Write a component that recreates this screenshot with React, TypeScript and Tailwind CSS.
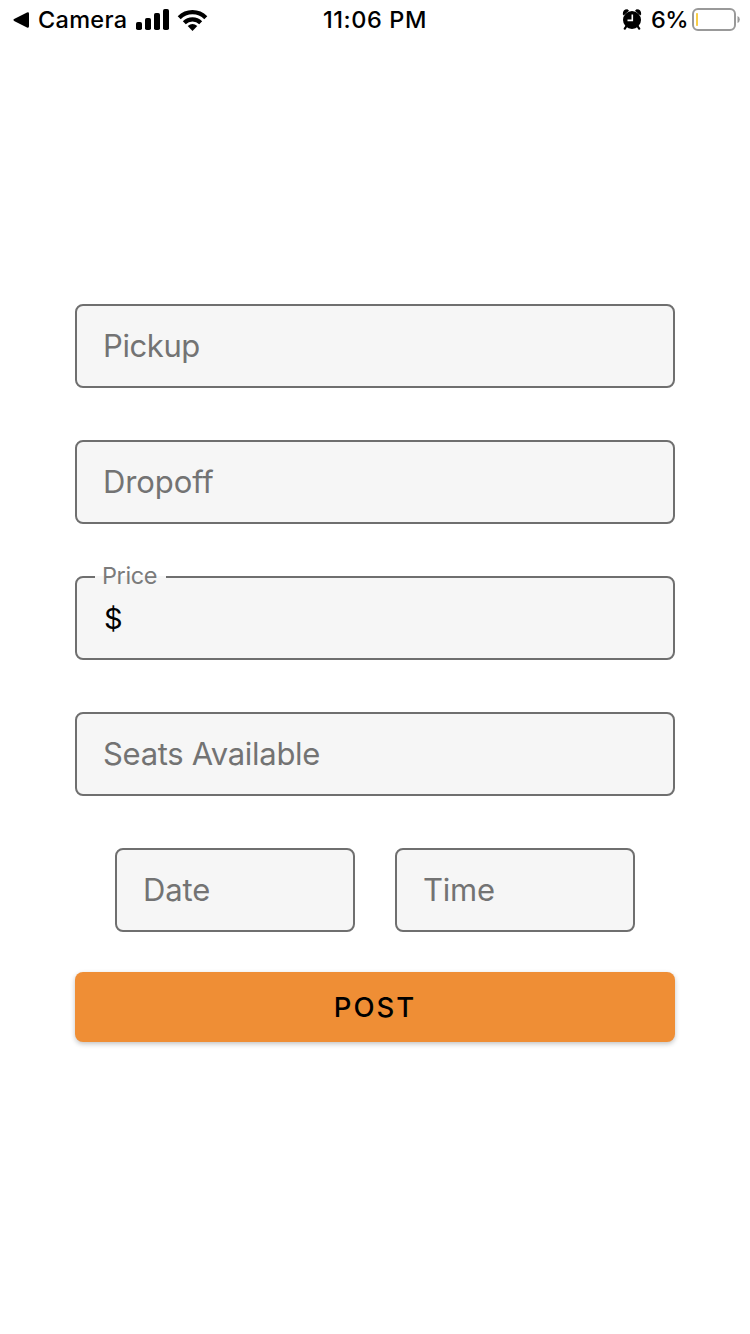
import React from "react";

function StatusBar() {
  return (
    <header className="grid h-10 grid-cols-3 text-[23.5px] font-medium leading-10 text-black">
      <div className="flex items-start pl-[13px]">
        <svg className="mt-[12px] h-[16px] w-4 shrink-0" viewBox="0 0 16 16">
          <path d="M1.6 6.8 14 .6q2-.8 2 1.2v12.4q0 2-2 1.2L1.6 9.2q-2.4-1.2 0-2.4Z" />
        </svg>
        <span className="ml-[9px] w-[89px] whitespace-nowrap tracking-[0.3px]">Camera</span>
        <svg className="ml-[9px] mt-[9px] h-[21px] w-[33px] shrink-0" viewBox="0 0 33 21">
          <rect x="0" y="13" width="6" height="8" rx="1.8" />
          <rect x="9" y="9" width="6" height="12" rx="1.8" />
          <rect x="18" y="4" width="6" height="17" rx="1.8" />
          <rect x="27" y="0" width="6" height="21" rx="1.8" />
        </svg>
        <svg className="ml-[8px] mt-[9px] h-[22px] w-[31px] shrink-0" viewBox="0 0 31 22">
          <g fill="none" stroke="#000" strokeWidth="4.2">
            <path d="M2.2 8.7C9.5 1.3 21.5 1.3 28.8 8.7" />
            <path d="M7.3 13.7C11.8 9.3 19.2 9.3 23.7 13.7" />
          </g>
          <path d="M10.7 17.1q4.8-4 9.6 0L15.5 22Z" />
        </svg>
      </div>
      <div className="whitespace-nowrap text-center tracking-[0.6px]">11:06 PM</div>
      <div className="flex items-start justify-end pr-[10px]">
        <svg className="mt-[9px] h-[21px] w-[20px] shrink-0" viewBox="0 0 20 21">
          <circle cx="10" cy="11" r="9" />
          <path d="M.8 5.2Q.8 0 5.8.4L7 1.7 1.7 6.4Z M19.2 5.2Q19.2 0 14.2.4L13 1.7 18.3 6.4Z" />
          <path d="M4.5 17 2.8 19.6M15.5 17 17.2 19.6" stroke="#000" strokeWidth="2.2" strokeLinecap="round" />
          <path d="M10.3 5.5V11.4H5.5" fill="none" stroke="#fff" strokeWidth="1.6" />
        </svg>
        <span className="ml-[9px] w-[36px] whitespace-nowrap tracking-[-0.6px]">6%</span>
        <svg className="ml-[5px] mt-[8px] h-[23px] w-[48px] shrink-0" viewBox="0 0 48 23">
          <rect x="1" y="1" width="42" height="21" rx="5" fill="none" stroke="#999" strokeWidth="2" />
          <path d="M45.5 8q2.3.8 2.3 3.5t-2.3 3.5Z" fill="#999" />
          <rect x="4" y="5" width="2" height="13" rx=".8" fill="#f8cd46" />
        </svg>
      </div>
    </header>
  );
}

function Field({ label, spacing = "tracking-[-0.3px]" }: { label: string; spacing?: string }) {
  return (
    <div className="flex h-[84px] items-center rounded-[8px] border-2 border-[#6f6f6f] bg-[#f6f6f6] pl-[26px] pt-px text-[31px] text-[#737373]">
      <span className={`whitespace-nowrap ${spacing}`}>{label}</span>
    </div>
  );
}

function PriceField() {
  return (
    <div className="relative flex h-[84px] items-center rounded-[8px] border-2 border-[#6f6f6f] bg-[#f6f6f6] pl-[27px] pt-[2px] text-[29px] text-black">
      <span className="absolute -top-[2px] left-[18px] h-[2px] w-[71px] bg-[#f6f6f6]" />
      <span className="absolute -top-[15px] left-[25px] whitespace-nowrap text-[23.5px] leading-[26px] tracking-[-0.4px] text-[#7b7b7b]">
        Price
      </span>
      <span>$</span>
    </div>
  );
}

export default function App() {
  return (
    <div className="h-[1334px] w-[750px] overflow-hidden bg-white font-['Inter',sans-serif]">
      <StatusBar />
      <main className="flex flex-col px-[75px] pt-[264px]">
        <div className="flex flex-col gap-[52px]">
          <Field label="Pickup" spacing="tracking-[-0.4px]" />
          <Field label="Dropoff" spacing="tracking-[-0.1px]" />
          <PriceField />
          <Field label="Seats Available" />
          <div className="grid grid-cols-2 gap-10 px-10">
            <Field label="Date" spacing="tracking-[-0.1px]" />
            <Field label="Time" spacing="tracking-[-0.2px]" />
          </div>
        </div>
        <button className="mt-10 h-[70px] rounded-[8px] bg-[#ef8e35] pt-px text-[27.5px] font-medium tracking-[2px] text-black shadow-[0_2px_5px_rgba(0,0,0,0.24)]">
          POST
        </button>
      </main>
    </div>
  );
}
